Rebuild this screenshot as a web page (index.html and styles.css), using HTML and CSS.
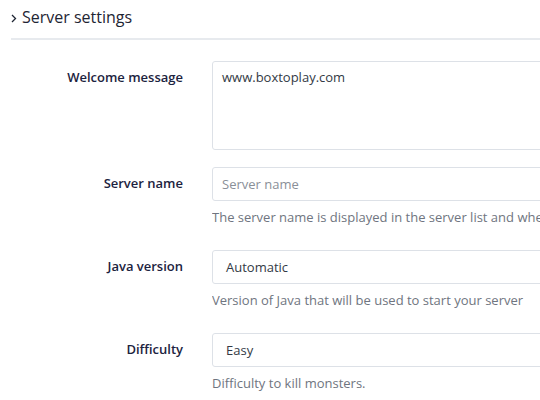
FILE: index.html
```html
<!DOCTYPE html>
<html>
<head>
<meta charset="utf-8">
<link rel="stylesheet" href="styles.css">
</head>
<body>
<div class="page">
  <div class="section-head">
    <svg class="chev" width="6" height="9" viewBox="0 0 6 9"><path d="M1 1 L4.5 4.5 L1 8" fill="none" stroke="#1e2533" stroke-width="1.3"/></svg>
    <span class="title">Server settings</span>
  </div>
  <form class="form">
    <div class="row">
      <label class="label">Welcome message</label>
      <div class="field">
        <div class="control textarea">www.boxtoplay.com</div>
      </div>
    </div>
    <div class="row">
      <label class="label">Server name</label>
      <div class="field">
        <div class="control input placeholder">Server name</div>
        <div class="help">The server name is displayed in the server list and when players join your server</div>
      </div>
    </div>
    <div class="row">
      <label class="label">Java version</label>
      <div class="field">
        <div class="control select">Automatic</div>
        <div class="help">Version of Java that will be used to start your server</div>
      </div>
    </div>
    <div class="row">
      <label class="label">Difficulty</label>
      <div class="field">
        <div class="control select">Easy</div>
        <div class="help">Difficulty to kill monsters.</div>
      </div>
    </div>
  </form>
</div>
</body>
</html>
```
FILE: styles.css
```css
html, body {
  margin: 0;
  padding: 0;
  background: #ffffff;
  overflow: hidden;
}
body {
  font-family: "Open Sans", "Noto Sans", sans-serif;
  color: #333a45;
  width: 540px;
  height: 400px;
}
.page {
  padding-left: 11px;
}
.section-head {
  display: flex;
  align-items: center;
  gap: 5px;
  padding: 6px 0 10px 0;
  height: 22px;
  border-bottom: 2px solid #e7eaee;
}
.chev {
  display: block;
  margin-top: 2px;
}
.title {
  font-size: 16px;
  line-height: 22px;
  color: #1e2533;
}
.form {
  margin-top: 21px;
  display: flex;
  flex-direction: column;
  gap: 17px;
}
.row {
  display: grid;
  grid-template-columns: 172px 1fr;
  column-gap: 29px;
  align-items: start;
}
.label {
  text-align: right;
  font-size: 13px;
  font-weight: 600;
  line-height: 18px;
  padding-top: 7px;
  color: #1c2340;
}
.field {
  display: flex;
  flex-direction: column;
  overflow: hidden;
  min-width: 0;
}
.control {
  box-sizing: border-box;
  width: 420px;
  flex-shrink: 0;
  border: 1px solid #dde1e7;
  border-radius: 3px;
  font-size: 13px;
  line-height: 18px;
  color: #333a45;
  white-space: nowrap;
}
.textarea {
  height: 89px;
  padding: 6px 9px;
}
.input {
  height: 34px;
  padding: 7px 9px;
}
.placeholder {
  color: #8a8f98;
}
.select {
  height: 34px;
  padding: 7px 13px;
}
.help {
  font-size: 13px;
  line-height: 18px;
  color: #6f7580;
  margin: 7px 0 7px 0;
  white-space: nowrap;
}
```
